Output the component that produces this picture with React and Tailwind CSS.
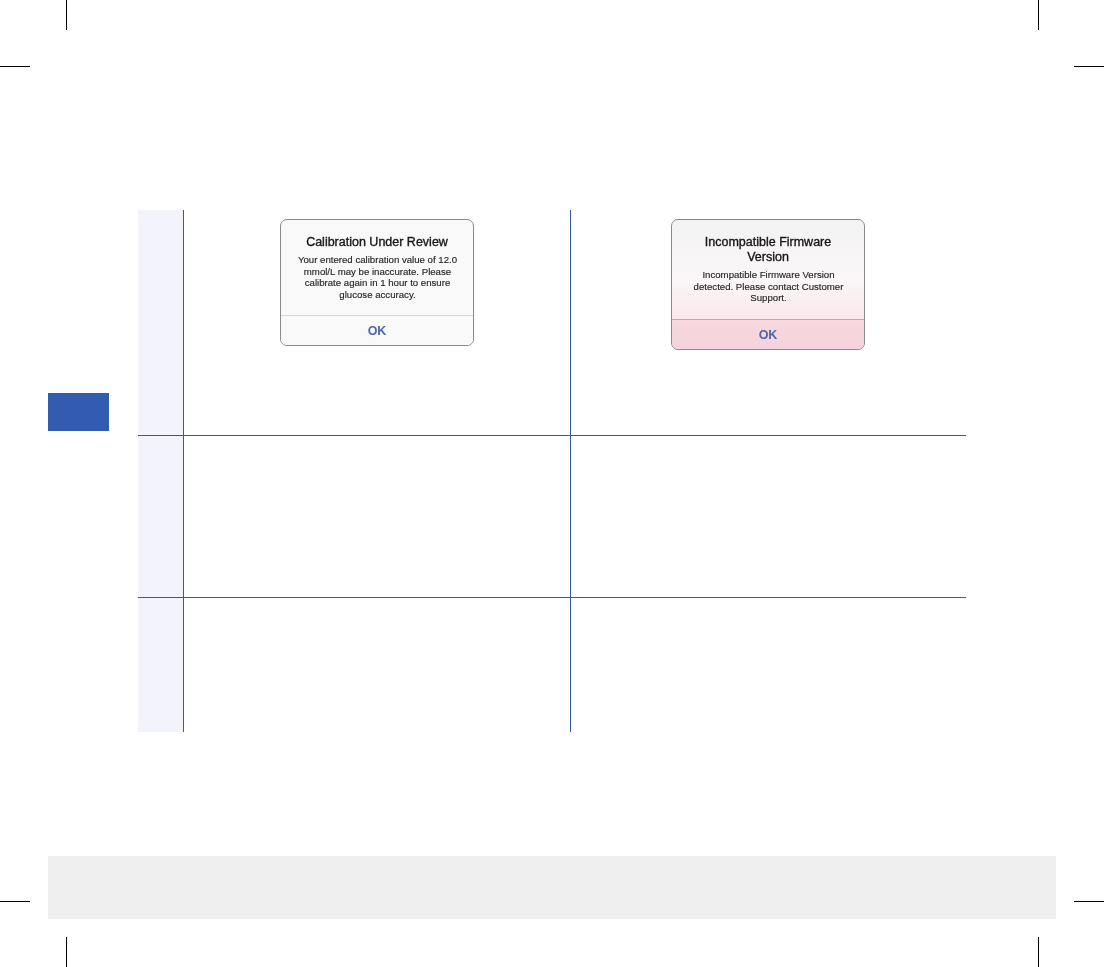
const sans = "font-['Liberation_Sans',Arial,sans-serif]";

function Dialog({ title, body, className, footClass, sepClass, bodyPt, footH }) {
  return (
    <div className={`w-[194px] rounded-[7px] border border-[#8a8a8a] overflow-hidden flex flex-col items-stretch text-center ${sans} ${className}`}>
      <div className="flex flex-col items-center pt-[15px] blur-[0.3px]">
        <div className="text-[12.5px] leading-[15px] font-normal text-[#161616] w-[180px] [-webkit-text-stroke:0.35px_#161616] whitespace-nowrap">{title}</div>
        <div className={`text-[9.65px] leading-[11.7px] text-[#262626] w-[188px] pl-[1px] [-webkit-text-stroke:0.15px_#262626] ${bodyPt}`}>
          {body.map((l) => (
            <div key={l} className="whitespace-nowrap">{l}</div>
          ))}
        </div>
      </div>
      <div className={`mt-auto border-t ${sepClass} ${footClass} ${footH} flex items-center justify-center pt-[2px]`}>
        <span className="text-[12.5px] font-bold text-[#4a68b0] blur-[0.25px]">OK</span>
      </div>
    </div>
  );
}

function Row({ height, border, left, right }) {
  return (
    <div className={`flex ${height} ${border ? "border-b border-[#3558ac]" : ""}`}>
      <div className="w-[46px] shrink-0 bg-[#f2f3fb] border-r border-[#3558ac]" />
      <div className="w-[387px] shrink-0 border-r border-[#3558ac] flex justify-center items-start pt-[9px]">{left}</div>
      <div className="flex-1 flex justify-center items-start pt-[9px] pr-[1px]">{right}</div>
    </div>
  );
}

function Mark({ className }) {
  return <div className={`absolute bg-black ${className}`} />;
}

export default function App() {
  return (
    <div className="relative w-[1104px] h-[967px] bg-white overflow-hidden">
      <Mark className="left-[66px] top-0 w-px h-[30px]" />
      <Mark className="left-[1038px] top-0 w-px h-[30px]" />
      <Mark className="left-0 top-[66px] w-[30px] h-px" />
      <Mark className="left-[1074px] top-[66px] w-[30px] h-px" />
      <Mark className="left-0 top-[901px] w-[30px] h-px" />
      <Mark className="left-[1074px] top-[901px] w-[30px] h-px" />
      <Mark className="left-[66px] top-[937px] w-px h-[30px]" />
      <Mark className="left-[1038px] top-[937px] w-px h-[30px]" />

      <div className="flex flex-col pt-[210px] pl-[48px] w-[1056px]">
        <div className="flex">
          <div className="w-[90px] shrink-0 pt-[183px]">
            <div className="w-[61px] h-[38px] bg-[#335cb0]" />
          </div>
          <div className="w-[828px] flex flex-col">
            <Row
              height="h-[226px]"
              border
              left={
                <Dialog
                  title="Calibration Under Review"
                  body={[
                    "Your entered calibration value of 12.0",
                    "mmol/L may be inaccurate. Please",
                    "calibrate again in 1 hour to ensure",
                    "glucose accuracy.",
                  ]}
                  className="h-[127px] bg-[#f9f9f9]"
                  footClass="bg-[#f9f9f9]"
                  sepClass="border-[#d4d4d4]"
                  bodyPt="pt-[4px]"
                  footH="h-[30px]"
                />
              }
              right={
                <Dialog
                  title={<>Incompatible Firmware<br />Version</>}
                  body={[
                    "Incompatible Firmware Version",
                    "detected. Please contact Customer",
                    "Support.",
                  ]}
                  className="h-[131px] bg-gradient-to-b from-[#f3f3f3] via-[#fbf7f8] via-45% to-[#f9dde2]"
                  footClass="bg-gradient-to-b from-[#f8d9dd] to-[#f5d2dd]"
                  sepClass="border-[#e29aa2]"
                  bodyPt="pt-[4px]"
                  footH="h-[30px]"
                />
              }
            />
            <Row height="h-[162px]" border />
            <Row height="h-[134px]" />
          </div>
        </div>
        <div className="mt-[124px] h-[63px] w-[1008px] bg-[#efefef]" />
      </div>
    </div>
  );
}
